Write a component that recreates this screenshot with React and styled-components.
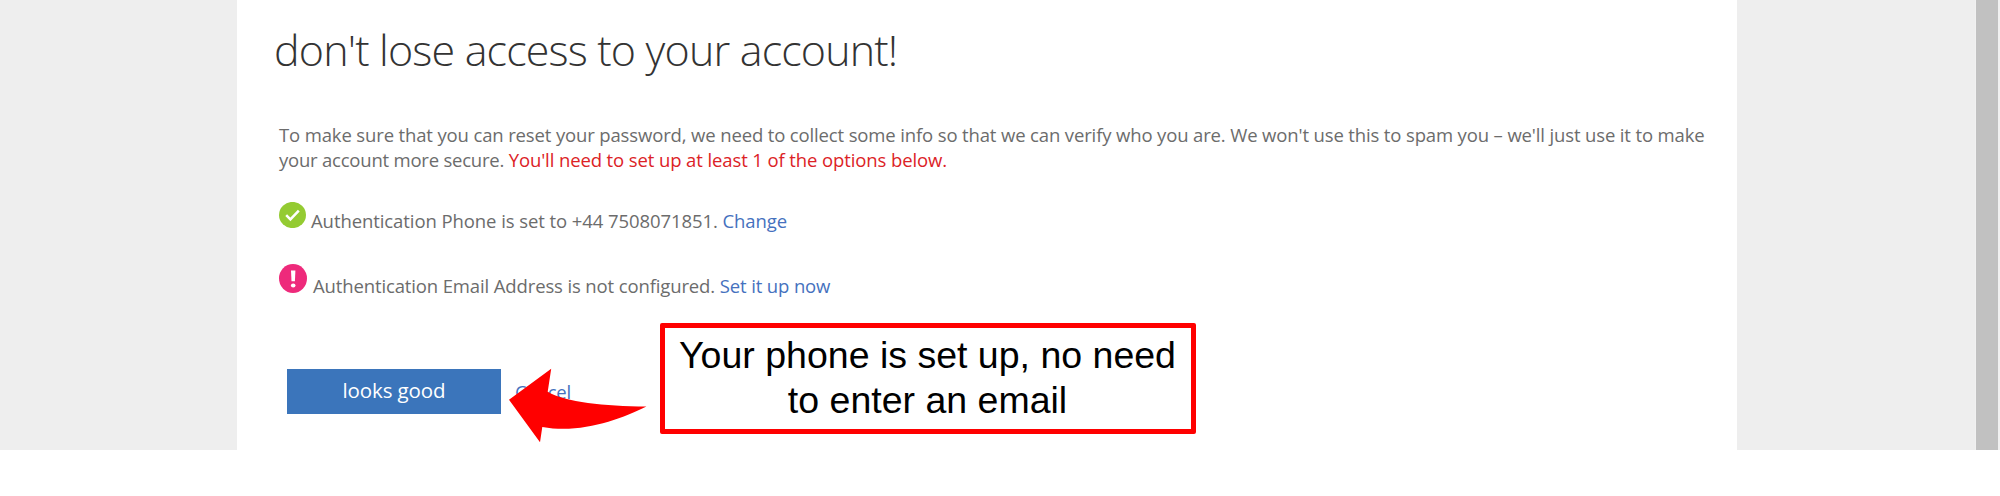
import React from "react";
import styled, { createGlobalStyle } from "styled-components";

const GlobalStyle = createGlobalStyle`
  *, *::before, *::after { box-sizing: border-box; }
  body {
    margin: 0;
    background: #fff;
    font-family: "Open Sans", "Noto Sans", sans-serif;
  }
`;

const Viewport = styled.div`
  position: relative;
  display: flex;
  width: 2000px;
  height: 450px;
  overflow: hidden;
  background: #eee;
`;

const Content = styled.div`
  flex: 1;
  padding-left: 237px;
`;

const Panel = styled.main`
  display: flex;
  flex-direction: column;
  width: 1500px;
  height: 100%;
  padding: 20px 0 0 42px;
  background: #fff;
`;

const ScrollTrack = styled.div`
  width: 25px;
  padding: 0 2px 0 1px;
  background: #f1f1f1;
`;

const ScrollThumb = styled.div`
  height: 100%;
  background: #c1c1c1;
`;

const Title = styled.h1`
  margin: 0 0 42px -5px;
  font-size: 43px;
  font-weight: 300;
  line-height: 60px;
  letter-spacing: -0.83px;
  white-space: nowrap;
  color: #333;
`;

const Copy = styled.p`
  margin: 0;
  font-size: 18.5px;
  line-height: 25px;
  letter-spacing: ${(p) => p.$tracking || "-0.14px"};
  white-space: nowrap;
  color: #6c6c6c;
`;

const Lead = styled.span`
  letter-spacing: -0.22px;
`;

const Warning = styled.span`
  letter-spacing: -0.11px;
  color: #dc2226;
`;

const Link = styled.a`
  font-size: 18.5px;
  color: #4571be;
  text-decoration: none;
  cursor: pointer;
`;

const Method = styled.div`
  display: flex;
  align-items: flex-start;
  height: ${(p) => p.$height};
  margin-top: ${(p) => p.$gap};

  & > ${Copy} {
    margin: ${(p) => p.$textOffset};
  }
`;

const StatusIcon = styled.svg`
  display: block;
  flex: none;
  width: ${(p) => p.$w}px;
  height: ${(p) => p.$h}px;
`;

const Actions = styled.div`
  display: flex;
  align-items: flex-start;
  margin: 76px 0 0 8px;
`;

const PrimaryButton = styled.button`
  width: 214px;
  height: 45px;
  padding: 0 0 3px;
  border: 0;
  background: #3b75bb;
  color: #fff;
  font: 400 20.5px/30px "Open Sans", sans-serif;
  letter-spacing: -0.1px;
`;

const CancelLink = styled(Link)`
  margin: 10px 0 0 14px;
  line-height: 25px;
  letter-spacing: -0.2px;
`;

const Arrow = styled.svg`
  position: absolute;
  left: 508px;
  top: 368px;
  width: 140px;
  height: 75px;
`;

const Callout = styled.aside`
  position: absolute;
  left: 660px;
  top: 323px;
  display: flex;
  flex-direction: column;
  align-items: center;
  width: 536px;
  height: 111px;
  padding: 5px 1px 0 0;
  border: 5px solid #f00;
  border-radius: 2px;
  background: #fff;
  color: #000;
  font: 37.5px/45px "Liberation Sans", Arial, sans-serif;
  white-space: nowrap;
`;

export default function App() {
  return (
    <>
      <GlobalStyle />
      <Viewport>
        <Content>
          <Panel>
            <Title>don't lose access to your account!</Title>
            <Copy>
              To make sure that you can reset your password, we need to collect some info so that we can verify who you are. We won't use this to spam you – we'll just use it to make
              <br />
              <Lead>your account more secure. </Lead>
              <Warning>You'll need to set up at least 1 of the options below.</Warning>
            </Copy>

            <Method $gap="30px" $height="32px" $textOffset="6px 0 0 5px">
              <StatusIcon $w={27} $h={26} viewBox="0 0 27 26">
                <ellipse cx="13.5" cy="13" rx="13.5" ry="13.1" fill="#94cb32" />
                <path d="M7.2 13.2 11.4 17.4 19.8 8.6" fill="none" stroke="#fff" strokeWidth="2.5" />
              </StatusIcon>
              <Copy $tracking="-0.08px">
                Authentication Phone is set to +44 7508071851. <Link>Change</Link>
              </Copy>
            </Method>

            <Method $gap="30px" $height="29px" $textOffset="9px 0 0 6px">
              <StatusIcon $w={28} $h={29} viewBox="0 0 28 29">
                <ellipse cx="14" cy="14.5" rx="14" ry="14.4" fill="#ee2a7b" />
                <path d="M12 6.5h4.4l-.5 10.8h-3.4z" fill="#fff" />
                <ellipse cx="14.2" cy="21.5" rx="2.3" ry="2.1" fill="#fff" />
              </StatusIcon>
              <Copy $tracking="-0.13px">
                Authentication Email Address is not configured. <Link>Set it up now</Link>
              </Copy>
            </Method>

            <Actions>
              <PrimaryButton>looks good</PrimaryButton>
              <CancelLink>Cancel</CancelLink>
            </Actions>
          </Panel>
        </Content>
        <ScrollTrack>
          <ScrollThumb />
        </ScrollTrack>

        <Arrow viewBox="0 0 140 75">
          <path
            d="M1 31.7 43.2 .7 39.7 23.7C58 34.5 96 38 138.4 38.6C112 52 72 66 34.3 59L32 74.2Z"
            fill="#f00"
          />
        </Arrow>
        <Callout>
          <span>Your phone is set up, no need</span>
          <span>to enter an email</span>
        </Callout>
      </Viewport>
    </>
  );
}
